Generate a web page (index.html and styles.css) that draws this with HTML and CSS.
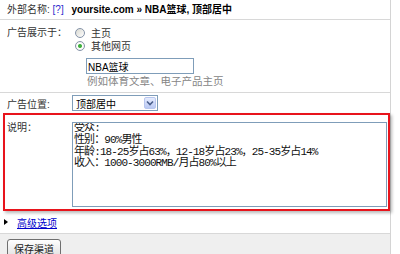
FILE: index.html
```html
<!DOCTYPE html>
<html lang="zh-CN">
<head>
    <meta charset="UTF-8">
    <meta name="viewport" content="width=device-width, initial-scale=1.0">
    <title>渠道设置</title>
    <link rel="stylesheet" href="styles.css">
</head>
<body>
    <div class="panel">
        <!-- 标题 -->
        <div class="hd">外部名称: <a class="help" href="#">[?]</a> <b class="name">yoursite.com » NBA篮球, 顶部居中</b></div>

        <!-- 广告展示于 -->
        <div class="row row-show">
            <div class="lbl">广告展示于：</div>
            <div class="fld">
                <label class="opt"><input type="radio" name="show">主页</label>
                <label class="opt"><input type="radio" name="show" checked>其他网页</label>
                <input class="txt" type="text" value="NBA篮球">
                <div class="hint">例如体育文章、电子产品主页</div>
            </div>
        </div>

        <!-- 广告位置 -->
        <div class="row row-pos">
            <div class="lbl">广告位置:</div>
            <div class="sel">
                <span class="sel-val">顶部居中</span>
                <span class="sel-btn">
                    <svg width="8" height="6" viewBox="0 0 8 6"><path d="M1 1.5 L4 4.5 L7 1.5" fill="none" stroke="#4a5f8c" stroke-width="1.6"/></svg>
                </span>
            </div>
        </div>

        <!-- 说明 -->
        <div class="note">
            <div class="lbl">说明：</div>
            <textarea class="desc">受众:
性别：90%男性
年龄:18-25岁占63%，12-18岁占23%，25-35岁占14%
收入：1000-3000RMB/月占80%以上</textarea>
        </div>

        <div class="adv"><span class="tri"></span><a href="#">高级选项</a></div>

        <div class="ft"><button type="button">保存渠道</button></div>
    </div>
</body>
</html>
```

FILE: styles.css
```css
body {
    margin: 0;
    font-family: "Liberation Sans", "Noto Sans CJK SC", sans-serif;
    font-size: 10px;
    color: #333;
    background: #fff;
}
.panel {
    width: 390px;
    border-right: 1px solid #d4d4d4;
}
.hd {
    height: 19px;
    line-height: 19px;
    padding-left: 7px;
    border-bottom: 1px solid #d8d8d8;
    white-space: nowrap;
}
.help {
    color: #2a2acc;
    text-decoration: none;
}
.name {
    color: #000;
    margin-left: 5px;
}
.row {
    display: flex;
    padding-left: 7px;
}
.lbl {
    width: 65px;
    flex: none;
}
.row-show {
    padding-top: 6px;
    padding-bottom: 5px;
    border-bottom: 1px solid #d8d8d8;
}
.row-show .lbl {
    line-height: 13px;
}
.fld {
    display: flex;
    flex-direction: column;
    align-items: flex-start;
}
.opt {
    display: flex;
    align-items: center;
    height: 13px;
    padding-left: 3px;
}
.opt input {
    appearance: none;
    width: 10px;
    height: 10px;
    margin: 0 6px 0 0;
    border: 1px solid #8593a8;
    border-radius: 50%;
    background: linear-gradient(135deg, #d8d8d0, #fff);
    box-sizing: border-box;
}
.opt input:checked {
    background: radial-gradient(circle, #35a335 0, #4cb84c 1.6px, #fff 2.4px, #e8e8e2 100%);
}
.txt {
    margin: 6px 0 0 14px;
    width: 108px;
    height: 16px;
    box-sizing: border-box;
    border: 1px solid #7f9db9;
    padding: 0 1px;
    font-family: "Liberation Sans", "Noto Sans CJK SC", sans-serif;
    font-size: 10px;
    color: #000;
}
.hint {
    margin: 1px 0 0 15px;
    line-height: 12px;
    font-size: 10.5px;
    color: #858585;
}
.row-pos {
    align-items: center;
    padding-top: 2px;
    padding-bottom: 2px;
}
.sel {
    display: flex;
    align-items: center;
    justify-content: space-between;
    width: 86px;
    height: 16px;
    box-sizing: border-box;
    border: 1px solid #7f9db9;
    padding: 0 1px 0 3px;
    color: #000;
    background: #fff;
}
.sel-btn {
    display: flex;
    align-items: center;
    justify-content: center;
    width: 12px;
    height: 12px;
    border: 1px solid #b8c6ee;
    border-radius: 2px;
    box-sizing: border-box;
    background: linear-gradient(#e6ecfe, #b9c8f3);
}
.note {
    display: flex;
    margin-left: 3px;
    border: 2px solid #e8141c;
    padding: 7px 1px 2px 2px;
    box-shadow: 2px 2px 3px rgba(0, 0, 0, 0.28);
}
.note .lbl {
    line-height: 12px;
}
.desc {
    width: 315px;
    height: 85px;
    box-sizing: border-box;
    margin: 0;
    border: 1px solid #7f9db9;
    padding: 0 1px;
    font-family: "Liberation Mono", "Noto Sans CJK SC", monospace;
    font-size: 11px;
    letter-spacing: -0.9px;
    line-height: 11.8px;
    color: #111;
    resize: none;
    overflow: hidden;
}
.adv {
    display: flex;
    align-items: center;
    height: 22px;
    padding-left: 4px;
    border-bottom: 1px solid #d8d8d8;
}
.tri {
    width: 0;
    height: 0;
    border-left: 4px solid #000;
    border-top: 3px solid transparent;
    border-bottom: 3px solid transparent;
    margin-right: 9px;
}
.adv a {
    color: #0000cc;
}
.ft {
    background: #efefef;
    padding: 5px 0 4px 7px;
}
.ft button {
    width: 54px;
    height: 18px;
    border: 1px solid #6f6f6f;
    border-radius: 3px;
    background: linear-gradient(#fefefe, #e2e2e2);
    font-family: "Liberation Sans", "Noto Sans CJK SC", sans-serif;
    font-size: 10px;
    color: #222;
    padding: 0;
}
```
